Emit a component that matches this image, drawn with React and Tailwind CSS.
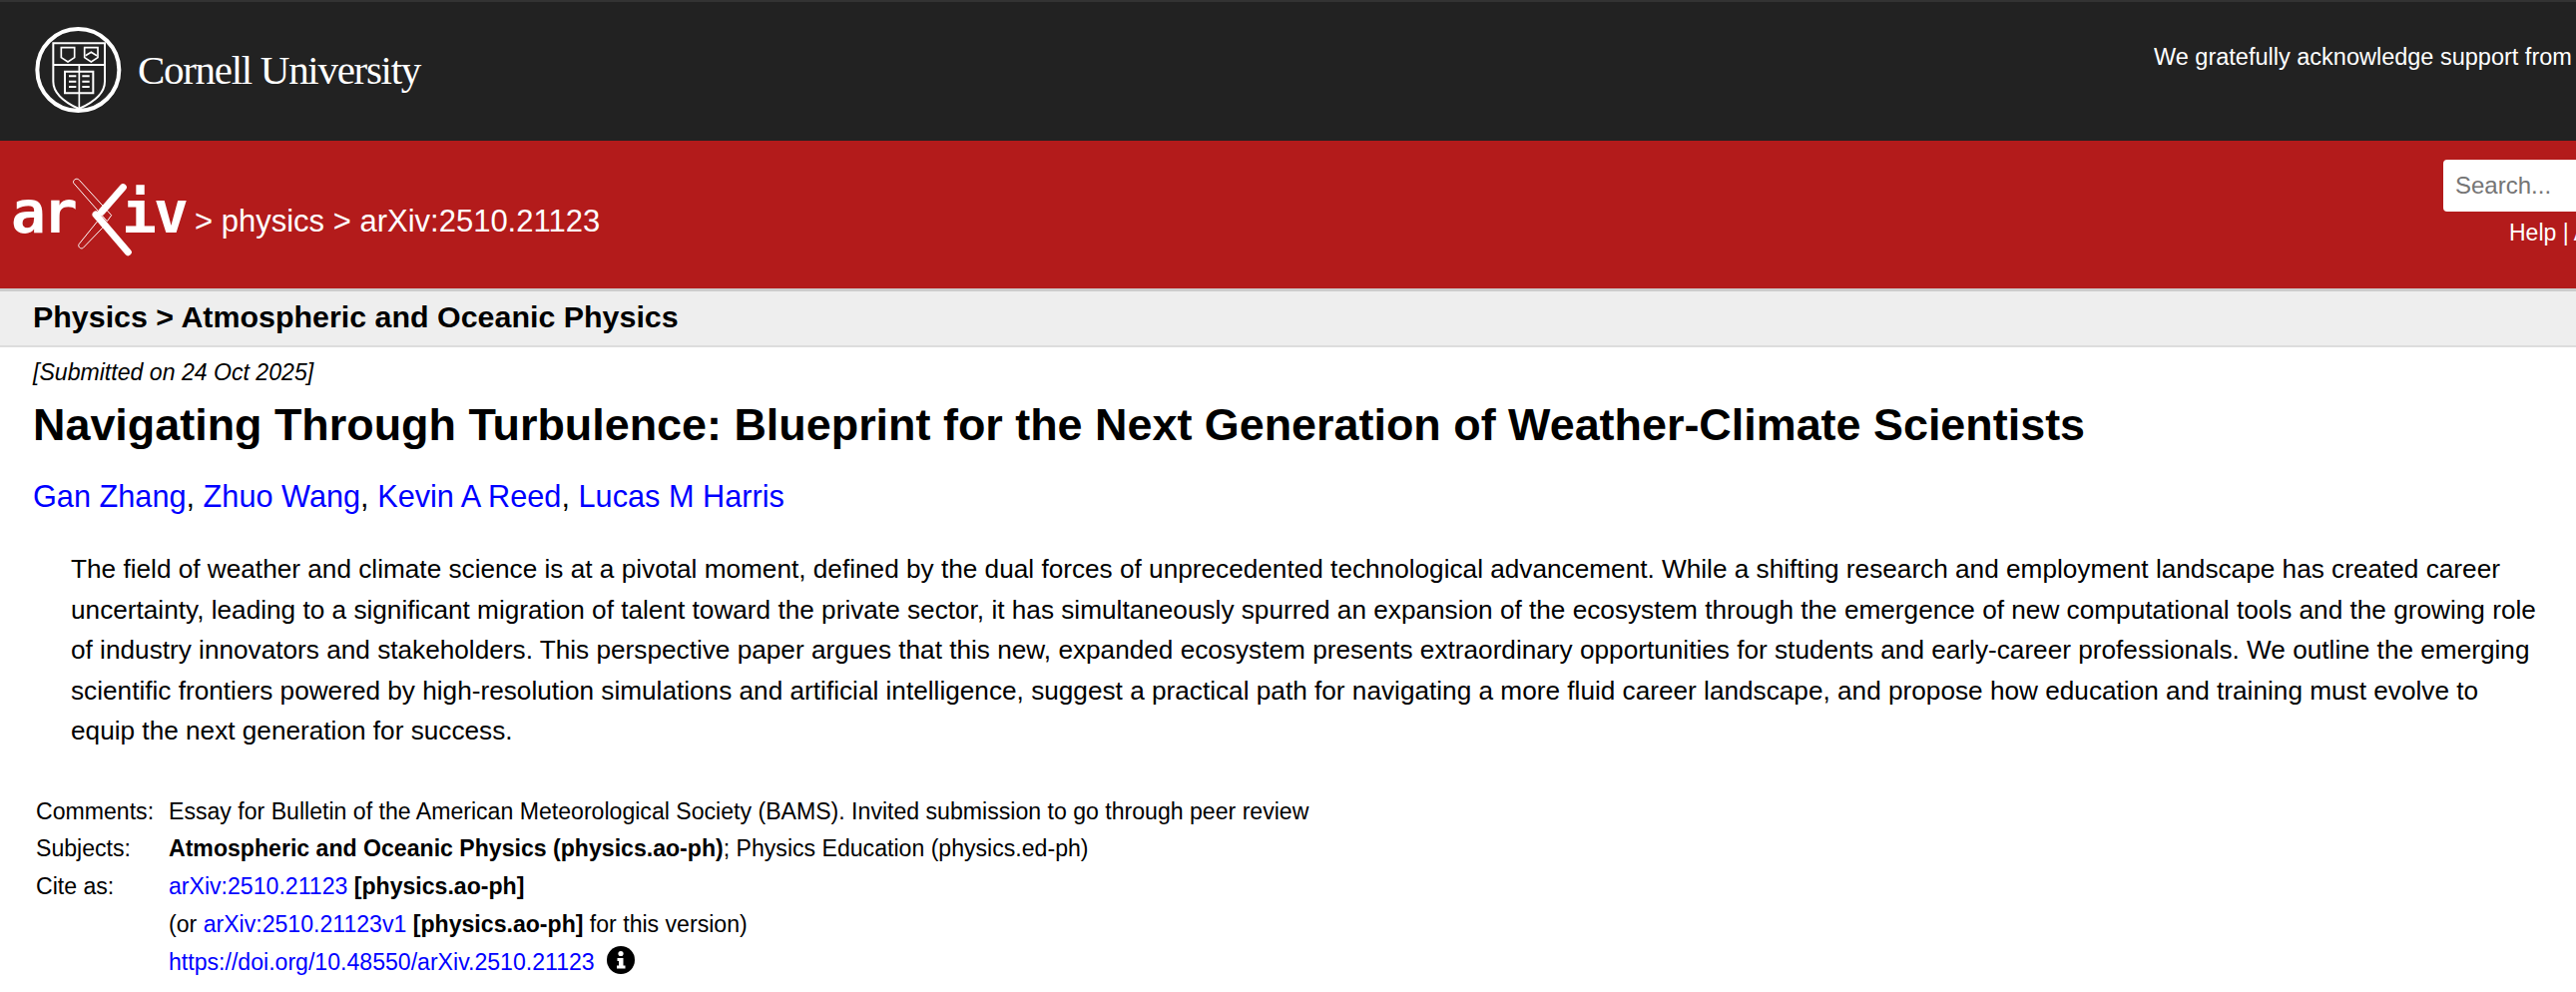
const sans = "font-['Liberation_Sans',Arial,sans-serif]"

function CornellSeal() {
    return (
        <svg width="110" height="110" viewBox="0 0 330 330" className="shrink-0" fill="none" stroke="white">
            <circle cx="175" cy="165" r="123" strokeWidth="12" />
            <path d="M100 85 H255 V200 C255 240 215 265 177 282 C140 265 100 240 100 200 Z" strokeWidth="6" />
            <path d="M100 150 H255" strokeWidth="6" />
            <path d="M124 98 H164 V128 L144 141 L124 128 Z" strokeWidth="5" />
            <path d="M194 98 H234 V128 L214 141 L194 128 Z" strokeWidth="5" />
            <path d="M197 122 L214 112 L231 122" strokeWidth="5" />
            <path d="M135 170 H220 V235 H135 Z" strokeWidth="6" />
            <path d="M178 150 V282" strokeWidth="5" />
            <path d="M147 184 H169 M147 200 H169 M147 216 H169 M187 184 H209 M187 200 H209 M187 216 H209" strokeWidth="6" />
        </svg>
    )
}

function ArxivLogo() {
    return (
        <div className="relative h-[100px] w-[195px] shrink-0 text-white">
            <span className="absolute left-[11px] top-[18px] font-['DejaVu_Sans_Mono',monospace] text-[58px] font-bold leading-[60px] tracking-[-3px]">ar</span>
            <span className="absolute left-[122px] top-[18px] font-['DejaVu_Sans_Mono',monospace] text-[58px] font-bold leading-[60px] tracking-[-3px]">iv</span>
            <svg className="absolute left-0 top-0" width="200" height="100" viewBox="0 0 600 300" fill="none">
                <path d="M370 68 L305 142" stroke="white" strokeWidth="21" strokeLinecap="round" />
                <path d="M288 150 L385 263" stroke="white" strokeWidth="21" strokeLinecap="round" />
                <path d="M221 55 C218 46 230 38 238 46 L335 152 L322 170 Z" stroke="white" strokeWidth="3" />
                <path d="M308 190 L250 250 C242 256 232 245 238 238 L293 170" stroke="white" strokeWidth="3" />
            </svg>
        </div>
    )
}

function MetaRow({ label, children }) {
    return (
        <div className="flex">
            <div className="w-[169px] shrink-0 pl-[36px]">{label}</div>
            <div>{children}</div>
        </div>
    )
}

export default function App() {
    return (
        <div className={`${sans} h-[994px] overflow-hidden bg-white text-black`}>
            <header className="flex h-[141px] justify-between border-t-2 border-[#333] bg-[#222] pl-[20px] text-white">
                <div className="mt-[13px] flex items-center self-start">
                    <CornellSeal />
                    <span className="ml-[8px] font-['Liberation_Serif',serif] text-[41px] leading-[44px] tracking-[-1.3px]">Cornell University</span>
                </div>
                <p className="mt-[41px] w-[423px] shrink-0 overflow-hidden whitespace-nowrap text-[23.500px] leading-[28px]">We gratefully acknowledge support from the</p>
            </header>

            <div className="flex h-[148px] items-start justify-between bg-[#b31b1b] text-white">
                <div className="mt-[24px] flex items-center">
                    <ArxivLogo />
                    <div className="mt-[14px] whitespace-nowrap text-[31px] leading-[36px]">
                        &gt; physics &gt; arXiv:2510.21123
                    </div>
                </div>
                <div className="mt-[19px] w-[133px] shrink-0 overflow-hidden">
                    <div className="flex h-[52px] w-full items-center rounded-l-[4px] bg-white pl-[12px] text-[24px] text-[#757575]">Search...</div>
                    <div className="mt-[6px] whitespace-nowrap pl-[66px] text-[23px] leading-[30px]">Help | Advanced</div>
                </div>
            </div>

            <div className="h-[3px] bg-[#ccc]" />
            <div className="flex h-[56px] items-center border-b-2 border-[#ddd] bg-[#eee] pb-[2px] pl-[33px] text-[30.400px] font-bold">
                Physics &gt; Atmospheric and Oceanic Physics
            </div>

            <main className="pl-[33px] pr-[28px]">
                <div className="mt-[11px] text-[23.100px] italic leading-[28px]">[Submitted on 24 Oct 2025]</div>
                <h1 className="mt-[14px] text-[44.900px] font-bold leading-[50px]">
                    Navigating Through Turbulence: Blueprint for the Next Generation of Weather-Climate Scientists
                </h1>
                <div className="mt-[29px] text-[30.700px] leading-[36px] text-[#00f]">
                    <a href="#">Gan Zhang</a><span className="text-black">,</span> <a href="#">Zhuo Wang</a><span className="text-black">,</span> <a href="#">Kevin A Reed</a><span className="text-black">,</span> <a href="#">Lucas M Harris</a>
                </div>
                <blockquote className="ml-[38px] mt-[34px] text-[26.200px] leading-[40.500px]">
                    The field of weather and climate science is at a pivotal moment, defined by the dual forces of unprecedented technological advancement. While a shifting research and employment landscape has created career uncertainty, leading to a significant migration of talent toward the private sector, it has simultaneously spurred an expansion of the ecosystem through the emergence of new computational tools and the growing role of industry innovators and stakeholders. This perspective paper argues that this new, expanded ecosystem presents extraordinary opportunities for students and early-career professionals. We outline the emerging scientific frontiers powered by high-resolution simulations and artificial intelligence, suggest a practical path for navigating a more fluid career landscape, and propose how education and training must evolve to equip the next generation for success.
                </blockquote>
            </main>

            <section className="mt-[42px] text-[23.100px] leading-[37.750px]">
                <MetaRow label="Comments:">Essay for Bulletin of the American Meteorological Society (BAMS). Invited submission to go through peer review</MetaRow>
                <MetaRow label="Subjects:">
                    <b>Atmospheric and Oceanic Physics (physics.ao-ph)</b>; Physics Education (physics.ed-ph)
                </MetaRow>
                <MetaRow label="Cite as:">
                    <div><a href="#" className="text-[#00f]">arXiv:2510.21123</a> <b>[physics.ao-ph]</b></div>
                    <div>(or <a href="#" className="text-[#00f]">arXiv:2510.21123v1</a> <b>[physics.ao-ph]</b> for this version)</div>
                    <div className="flex items-center">
                        <a href="#" className="text-[#00f]">https://doi.org/10.48550/arXiv.2510.21123</a>
                        <svg className="ml-[12px] -mt-[5px]" width="28" height="28" viewBox="0 0 28 28">
                            <circle cx="14" cy="14" r="14" fill="black" />
                            <circle cx="14" cy="7.500" r="2.600" fill="white" />
                            <path d="M10.500 12 H16.500 V19.500 H18.500 V22.500 H10 V19.500 H12 V15 H10.500 Z" fill="white" />
                        </svg>
                    </div>
                </MetaRow>
            </section>
        </div>
    )
}
